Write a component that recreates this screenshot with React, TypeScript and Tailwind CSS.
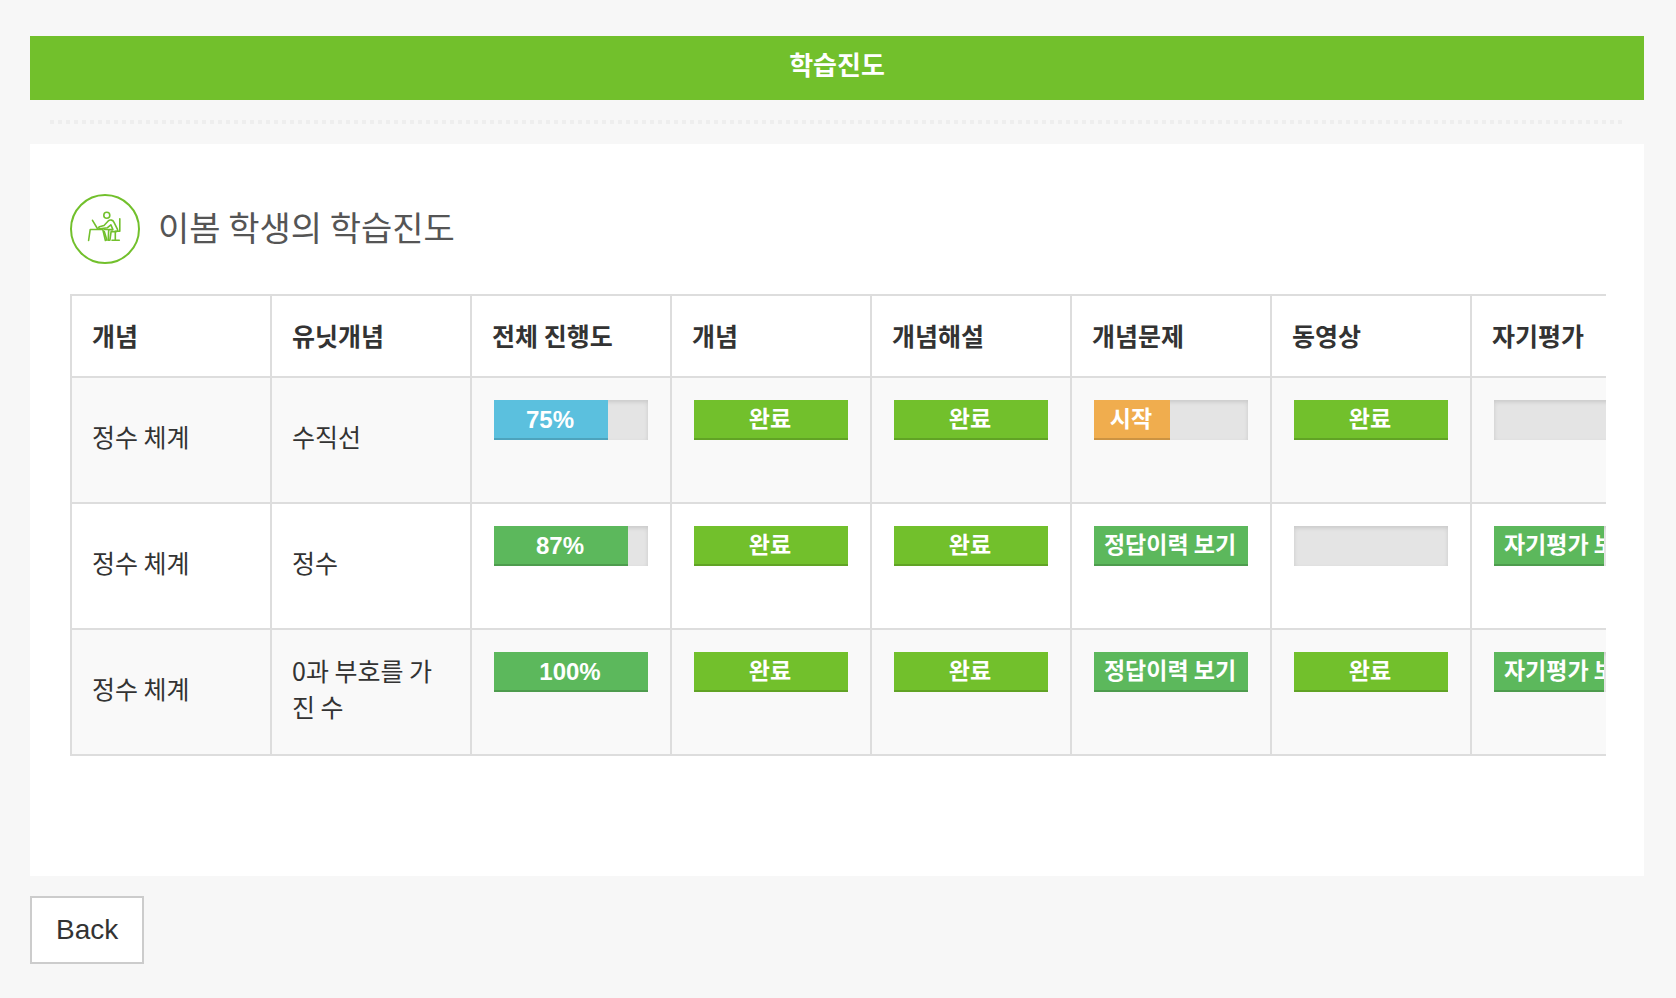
type Tone = "info" | "success" | "done" | "start";

interface Progress {
  value: number;
  tone?: Tone;
  label?: string;
  numeric?: boolean;
  wide?: boolean;
}

interface Row {
  concept: string;
  unit: string;
  cells: Progress[];
}

const toneClass: Record<Tone, string> = {
  info: "bg-[#5bc0de]",
  success: "bg-[#5cb85c]",
  done: "bg-[#72c02c]",
  start: "bg-[#f0ad4e]",
};

const done: Progress = { value: 100, tone: "done", label: "완료" };
const empty: Progress = { value: 0 };
const answers: Progress = { value: 100, tone: "success", label: "정답이력 보기" };
const review: Progress = { value: 71.4, tone: "success", label: "자기평가 보기", wide: true };

const headings = ["개념", "유닛개념", "전체 진행도", "개념", "개념해설", "개념문제", "동영상", "자기평가"];

const rows: Row[] = [
  {
    concept: "정수 체계",
    unit: "수직선",
    cells: [
      { value: 74, tone: "info", label: "75%", numeric: true },
      done,
      done,
      { value: 49.4, tone: "start", label: "시작" },
      done,
      empty,
    ],
  },
  {
    concept: "정수 체계",
    unit: "정수",
    cells: [{ value: 87, tone: "success", label: "87%", numeric: true }, done, done, answers, empty, review],
  },
  {
    concept: "정수 체계",
    unit: "0과 부호를 가진 수",
    cells: [{ value: 100, tone: "success", label: "100%", numeric: true }, done, done, answers, done, review],
  },
];

function ProgressBar({ value, tone, label, numeric, wide }: Progress) {
  return (
    <div className="h-10 w-full overflow-hidden bg-[#e4e4e4] shadow-[inset_0_2px_4px_rgba(0,0,0,0.12)]">
      {tone && (
        <div
          className={`flex h-full overflow-hidden whitespace-nowrap text-white shadow-[inset_0_-2px_0_rgba(0,0,0,0.15)] ${toneClass[tone]}`}
          style={{ width: `${value}%` }}
        >
          <span
            className={`shrink-0 pr-[2px] text-center font-bold ${wide ? "w-[154px]" : "w-full"} ${
              numeric ? "font-['Liberation_Sans',sans-serif] text-2xl leading-10" : "text-[23px] leading-[34px]"
            }`}
          >
            {label}
          </span>
        </div>
      )}
    </div>
  );
}

function StudentIcon() {
  return (
    <span className="flex size-[70px] items-center justify-center rounded-full border-2 border-[#72c02c] pb-[5px] text-[#72c02c]">
      <svg width="36" height="32" viewBox="0 0 36 32" fill="none" stroke="currentColor" strokeWidth="1.6" strokeLinejoin="round" strokeLinecap="round" aria-hidden="true">
        <circle cx="19.8" cy="4.3" r="3" />
        <path d="M5.500 9.300l5.200 8.700" />
        <path d="M1.600 29.500l1.600-11H15.800l2.600 11" />
        <path d="M12.500 15.800l4.500-1.300 4-4.300c2.200-2 5-1.200 5.900 1l3.600 7.200c.5 1.400-.3 2.200-1.600 2.200h-4.800l-1.200 8.600h-1.700l.5-10.600h4.200l-2-4.800-3.400 2.900-7.300 1c-1.700 0-1.900-1.400-.7-1.900z" />
        <path d="M17.300 18.500h3.500M17.300 20.500l2.600 8.700M32.800 7.800v12.400h-4.500M28.300 20.500v8.600M25 29.200h7.300" />
      </svg>
    </span>
  );
}

export default function App() {
  return (
    <div className="min-h-screen bg-[#f7f7f7] pt-9 pr-8 pb-8 pl-[30px] font-['Noto_Sans_CJK_KR',sans-serif] text-[#333]">
      <header className="h-16 bg-[#72c02c] pt-2 text-center text-white">
        <h1 className="text-[26px] leading-10 font-bold">학습진도</h1>
      </header>

      <div className="mx-5 my-5 h-1 bg-[repeating-linear-gradient(to_right,#eeeeee_0_4px,transparent_4px_8px)]" />

      <main className="bg-white pt-[50px] pr-[38px] pb-[120px] pl-10">
        <div className="mb-[30px] flex items-center gap-[18px]">
          <StudentIcon />
          <h2 className="pb-1 text-[34px] leading-[48px] text-[#555]">이봄 학생의 학습진도</h2>
        </div>

        <div className="overflow-x-auto [scrollbar-width:none]">
          <table className="w-[1602px] table-fixed border-collapse text-[25px] leading-9">
            <thead>
              <tr className="h-[82px]">
                {headings.map((heading, i) => (
                  <th key={i} scope="col" className="border-2 border-[#ddd] px-5 pb-[2px] text-left font-bold">
                    {heading}
                  </th>
                ))}
              </tr>
            </thead>
            <tbody>
              {rows.map((row, i) => (
                <tr key={i} className="h-[126px] odd:bg-[#f9f9f9]">
                  <td className="border-2 border-[#ddd] px-5 pb-2">{row.concept}</td>
                  <td className="border-2 border-[#ddd] px-5 pb-2 break-all">{row.unit}</td>
                  {row.cells.map((cell, j) => (
                    <td key={j} className="border-2 border-[#ddd] px-[22px] pt-[22px] align-top">
                      <ProgressBar {...cell} />
                    </td>
                  ))}
                </tr>
              ))}
            </tbody>
          </table>
        </div>
      </main>

      <button
        type="button"
        className="mt-5 h-[68px] border-2 border-[#ccc] bg-white px-6 font-['Liberation_Sans',sans-serif] text-[28px] leading-10"
      >
        Back
      </button>
    </div>
  );
}
